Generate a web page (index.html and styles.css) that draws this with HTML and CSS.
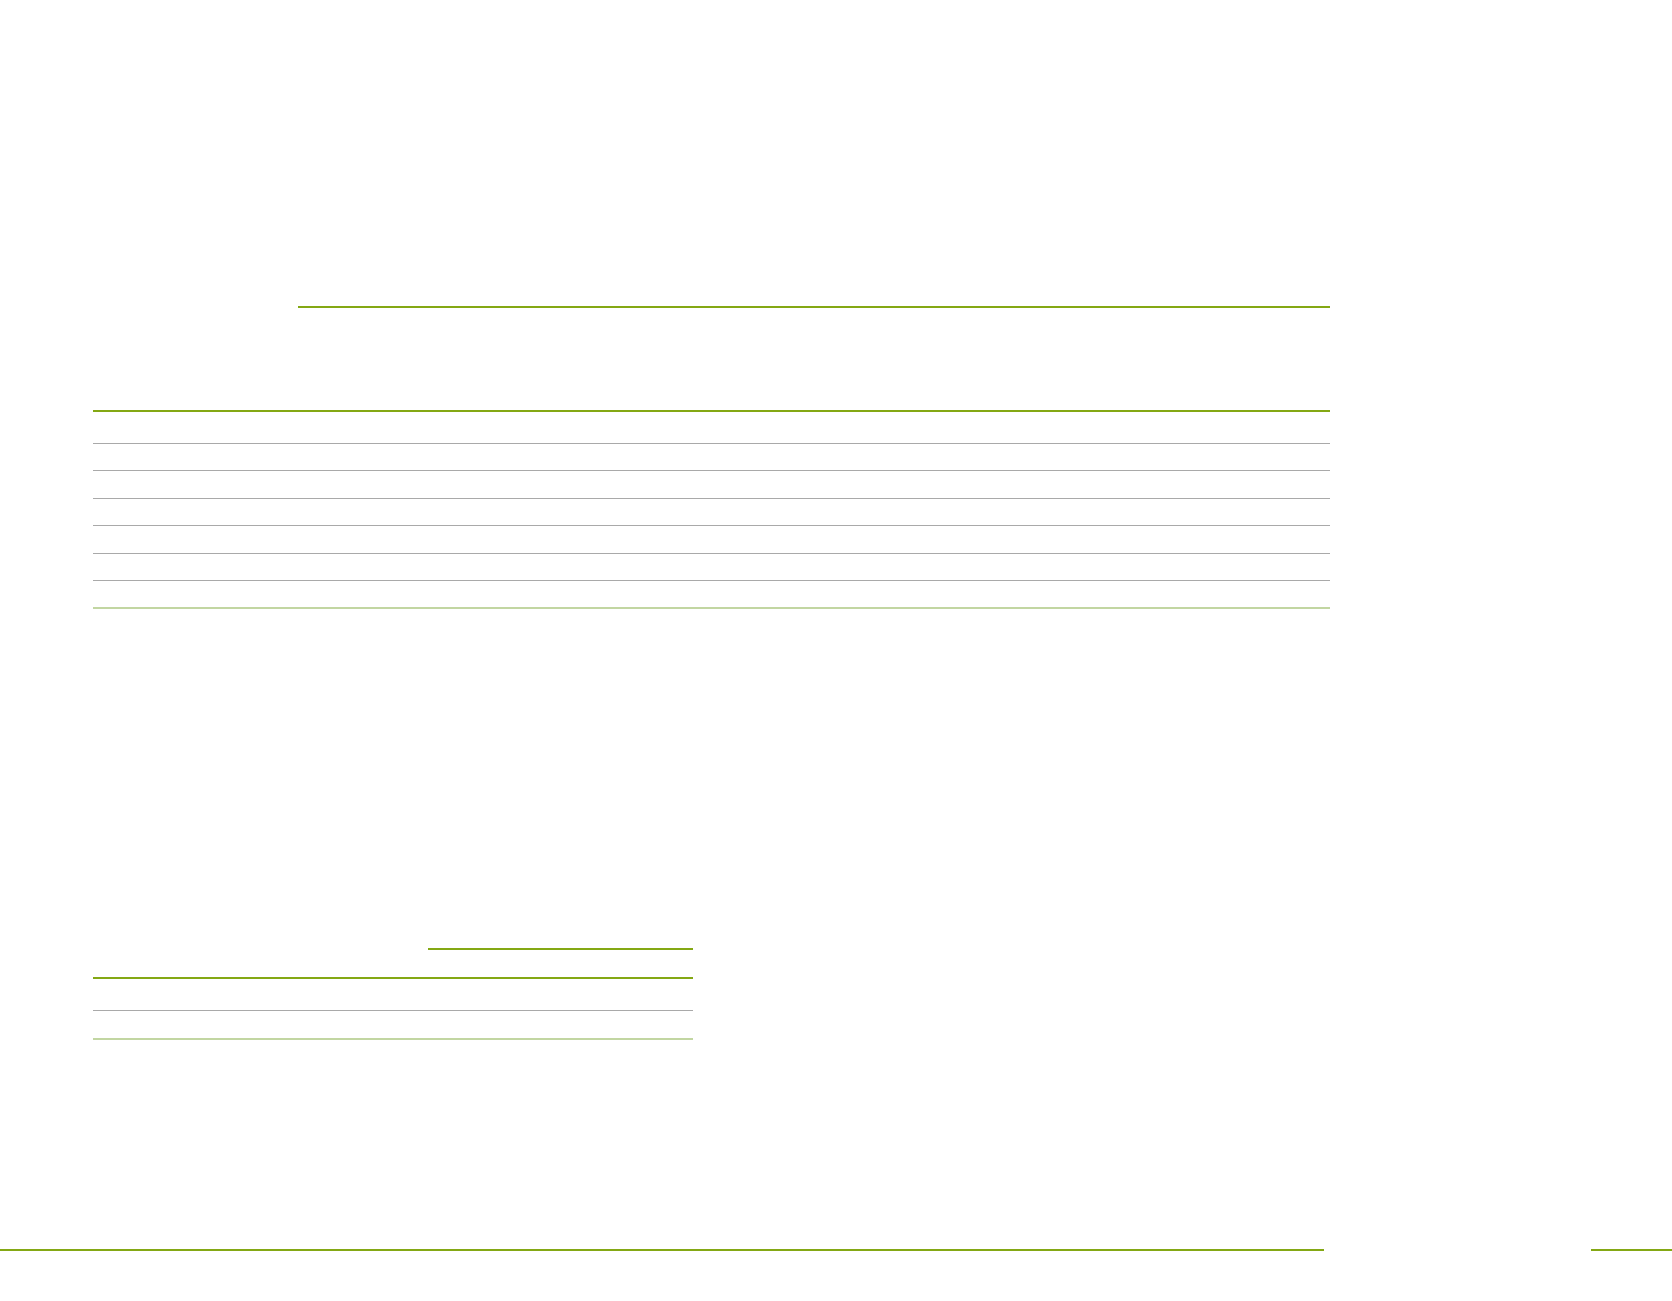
FILE: index.html
```html
<!DOCTYPE html>
<html lang="en">
<head>
<meta charset="utf-8">
<title>Document</title>
<link rel="stylesheet" href="styles.css">
</head>
<body>
  <div class="page">
    <header class="doc-header">
      <div class="doc-title"></div>
    </header>

    <main class="content">
      <section class="table table-wide">
        <div class="row head"></div>
        <div class="row"></div>
        <div class="row"></div>
        <div class="row"></div>
        <div class="row"></div>
        <div class="row"></div>
        <div class="row last"></div>
      </section>

      <section class="block-small">
        <div class="caption"></div>
        <div class="table table-narrow">
          <div class="row head"></div>
          <div class="row last"></div>
        </div>
      </section>
    </main>

    <footer class="doc-footer">
      <div class="foot-rule left"></div>
      <div class="foot-logo"></div>
      <div class="foot-rule right"></div>
    </footer>
  </div>
</body>
</html>
```

FILE: styles.css
```css
* { box-sizing: border-box; }

html, body {
  margin: 0;
  padding: 0;
  background: #ffffff;
  font-family: "Liberation Sans", Arial, sans-serif;
  color: #ffffff;
}

.page {
  width: 1672px;
  height: 1301px;
  display: flex;
  flex-direction: column;
}

.doc-header {
  display: flex;
  padding-left: 298px;
}

.doc-title {
  width: 1032px;
  height: 308px;
  border-bottom: 2px solid #84a814;
}

.content {
  padding-left: 93px;
  display: flex;
  flex-direction: column;
}

.table {
  border-top: 2px solid #84a814;
  display: flex;
  flex-direction: column;
}

.table-wide {
  width: 1237px;
  margin-top: 102px;
}

.row {
  height: 27.4px;
  border-bottom: 1px solid #a9a9a9;
}

.row.head {
  height: 32px;
}

.row.last {
  height: 28.4px;
  border-bottom: 2px solid #c2d6a2;
}

.block-small {
  width: 600px;
  display: flex;
  flex-direction: column;
  align-items: flex-end;
}

.caption {
  width: 265px;
  height: 49px;
  margin-top: 292px;
  border-bottom: 2px solid #84a814;
}

.table-narrow {
  width: 600px;
  margin-top: 27px;
}

.table-narrow .row.last {
  height: 29px;
}

.doc-footer {
  display: flex;
  margin-top: 209px;
}

.foot-rule {
  height: 2px;
  background: #84a814;
}

.foot-rule.left { width: 1324px; }

.foot-logo { width: 267px; height: 2px; }

.foot-rule.right { flex: 1; }
```
